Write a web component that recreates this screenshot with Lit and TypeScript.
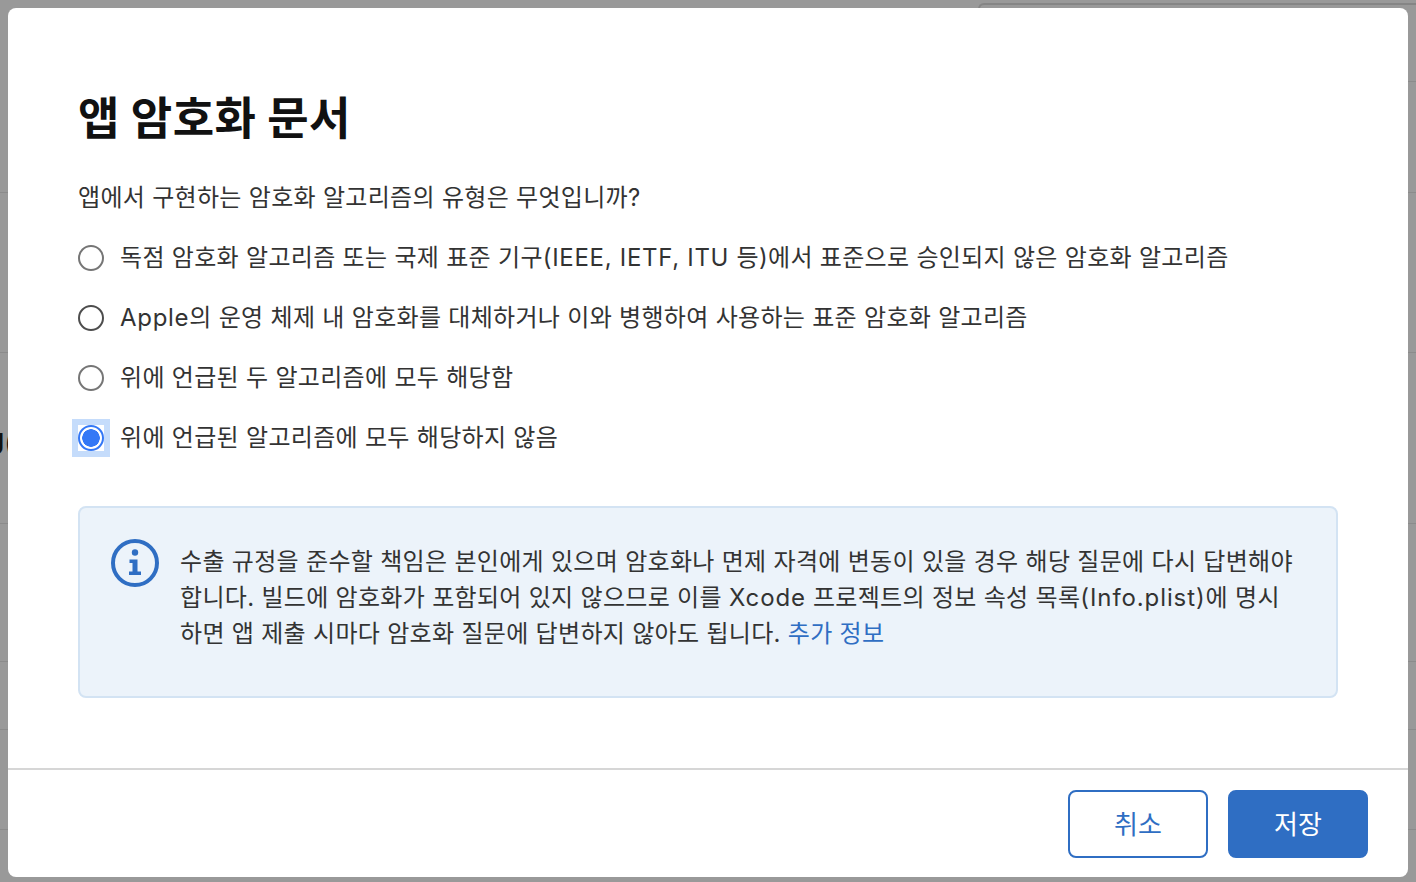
import { LitElement, html, css, svg } from 'lit';
import { customElement, state } from 'lit/decorators.js';

const OPTIONS = [
  html`독점 암호화 알고리즘 또는 국제 표준 기구<span class="latin">(IEEE, IETF, ITU </span>등)에서 표준으로 승인되지 않은 암호화 알고리즘`,
  html`<span class="latin">Apple</span>의 운영 체제 내 암호화를 대체하거나 이와 병행하여 사용하는 표준 암호화 알고리즘`,
  html`위에 언급된 두 알고리즘에 모두 해당함`,
  html`위에 언급된 알고리즘에 모두 해당하지 않음`,
];

// divider rows of the page behind the modal
const PAGE_LINES = [192, 352, 523, 661, 729, 829];

const infoIcon = svg`
  <svg class="info-icon" width="48" height="48" viewBox="0 0 48 48">
    <circle cx="24" cy="24" r="22" fill="none" stroke="#2f6ec3" stroke-width="4"></circle>
    <circle cx="24" cy="13.5" r="3.2" fill="#2f6ec3"></circle>
    <path d="M18.5 20.5h8v12h3.5v3.5H18v-3.5h3.5v-8.5h-3z" fill="#2f6ec3"></path>
  </svg>
`;

@customElement('app-root')
export class AppRoot extends LitElement {
  static styles = css`
    :host {
      display: block;
      height: 882px;
      font-family: 'Inter', 'Noto Sans CJK KR', sans-serif;
    }

    .backdrop {
      position: relative;
      box-sizing: border-box;
      height: 882px;
      padding: 8px 8px 5px;
      background: #999;
      overflow: hidden;
    }

    .page-line {
      position: absolute;
      left: 0;
      right: 0;
      height: 1px;
      background: #8b8b8b;
    }

    .page-line.short {
      top: 81px;
      left: 1000px;
    }

    .page-card {
      position: absolute;
      top: 3px;
      left: 978px;
      right: 0;
      height: 20px;
      border: solid #858585;
      border-width: 2px 0 0 2px;
      border-top-left-radius: 6px;
    }

    .page-text {
      position: absolute;
      top: 424px;
      right: 1401px;
      font-size: 28px;
      font-weight: 600;
      line-height: 40px;
      white-space: nowrap;
      color: #111;
    }

    .dialog {
      position: relative;
      display: flex;
      flex-direction: column;
      height: 100%;
      background: #fff;
      border-radius: 8px;
      overflow: hidden;
    }

    .body {
      flex: 1;
      padding: 79px 70px 0;
    }

    h1 {
      margin: 0 0 29px;
      font-size: 45px;
      line-height: 64px;
      font-weight: 700;
      letter-spacing: 0.4px;
      color: #111;
    }

    .question {
      margin: 0 0 24px;
      font-size: 24px;
      line-height: 36px;
      letter-spacing: 0.3px;
      color: #333;
    }

    .options {
      display: flex;
      flex-direction: column;
      gap: 24px;
    }

    .option {
      display: flex;
      align-items: flex-start;
      gap: 16px;
      height: 36px;
      font-size: 24px;
      line-height: 36px;
      letter-spacing: 0.3px;
      color: #333;
      cursor: pointer;
    }

    .latin {
      letter-spacing: 0.7px;
    }

    .radio {
      box-sizing: border-box;
      flex: none;
      width: 26px;
      height: 26px;
      margin-top: 5px;
      background: #fff;
    }

    .radio::before {
      content: '';
      display: block;
      box-sizing: border-box;
      width: 26px;
      height: 26px;
      border: 2px solid #767676;
      border-radius: 50%;
    }

    .option.hovered .radio::before {
      border-color: #4d4d4d;
    }

    .option.selected .radio {
      outline: 6px solid #c5dcfb;
    }

    .option.selected .radio::before {
      border-color: #3478f6;
      background: radial-gradient(circle, #3478f6 0 8.5px, #fff 9px);
    }

    .notice {
      display: flex;
      gap: 21px;
      box-sizing: border-box;
      height: 192px;
      margin-top: 50px;
      padding: 36px 31px;
      background: #ecf3fa;
      border: 2px solid #d3e3f3;
      border-radius: 8px;
    }

    .notice p {
      margin: 0;
      font-size: 24px;
      line-height: 36px;
      letter-spacing: 0.3px;
      white-space: nowrap;
      color: #333;
    }

    .notice .latin {
      letter-spacing: 0.9px;
    }

    .notice a {
      color: #2f6ec3;
      text-decoration: none;
    }

    .info-icon {
      flex: none;
      margin-top: -5px;
    }

    .footer {
      display: flex;
      justify-content: flex-end;
      gap: 20px;
      padding: 20px 40px 19px;
      border-top: 2px solid #d6d6d6;
    }

    button {
      box-sizing: border-box;
      width: 140px;
      height: 68px;
      padding: 0 0 4px;
      border-radius: 8px;
      border: 2px solid #2f6ec3;
      font: inherit;
      font-size: 26px;
      cursor: pointer;
    }

    .secondary {
      background: #fff;
      color: #2f6ec3;
    }

    .primary {
      background: #2f6ec3;
      color: #fff;
    }
  `;

  @state()
  private selected = 3;

  render() {
    return html`
      <div class="backdrop">
        ${PAGE_LINES.map(
          (y) => html`<div class="page-line" style="top: ${y}px"></div>`
        )}
        <div class="page-line short"></div>
        <div class="page-card"></div>
        <div class="page-text">J(</div>
        <div class="dialog">
          <div class="body">
            <h1>앱 암호화 문서</h1>
            <p class="question">앱에서 구현하는 암호화 알고리즘의 유형은 무엇입니까?</p>
            <div class="options">
              ${OPTIONS.map(
                (text, index) => html`
                  <div
                    class="option ${index === this.selected ? 'selected' : ''} ${index === 1 ? 'hovered' : ''}"
                    @click="${() => (this.selected = index)}"
                  >
                    <span class="radio"></span>
                    <span>${text}</span>
                  </div>
                `
              )}
            </div>
            <div class="notice">
              ${infoIcon}
              <p>
                수출 규정을 준수할 책임은 본인에게 있으며 암호화나 면제 자격에 변동이 있을 경우 해당 질문에 다시 답변해야<br />
                합니다. 빌드에 암호화가 포함되어 있지 않으므로 이를 <span class="latin">Xcode</span> 프로젝트의 정보 속성 목록<span class="latin">(Info.plist)</span>에 명시<br />
                하면 앱 제출 시마다 암호화 질문에 답변하지 않아도 됩니다. <a href="#">추가 정보</a>
              </p>
            </div>
          </div>
          <div class="footer">
            <button class="secondary">취소</button>
            <button class="primary">저장</button>
          </div>
        </div>
      </div>
    `;
  }
}
